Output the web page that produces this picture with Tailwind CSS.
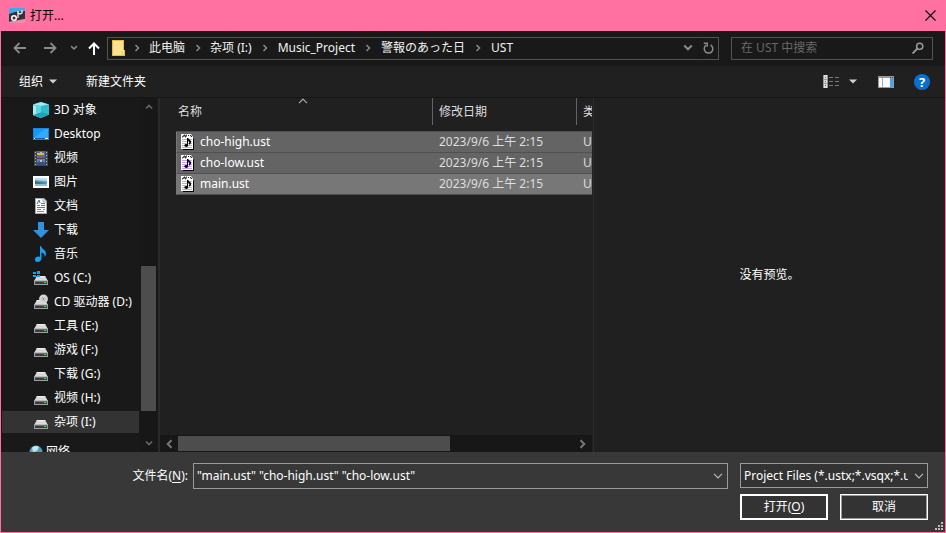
<!DOCTYPE html>
<html lang="zh-CN">
<head>
<meta charset="utf-8">
<title>打开...</title>
<script src="https://cdn.jsdelivr.net/npm/@tailwindcss/browser@4"></script>
</head>
<body class="h-screen overflow-hidden bg-[#191919] font-['Noto_Sans','Noto_Sans_CJK_SC',sans-serif] text-xs text-white">
<svg class="hidden" aria-hidden="true">
  <symbol id="drive" viewBox="0 0 16 16">
    <path d="M4 5h8l3 5H1z" fill="#d9dadd"/><path d="M4 5h8l.6 1H3.4z" fill="#eeeff1"/>
    <path d="M1 9.500h14v4.500H1z" fill="#9c9ea2"/><path d="M2 10.500h12v2.500H2z" fill="#3a3c40"/>
    <path d="M11 11h2v1h-2z" fill="#35e04a"/>
  </symbol>
  <symbol id="ust" viewBox="0 0 14 16">
    <path d="M2 15h10V4l1 1v11H2z" fill="#000"/><path d="M0 0h10l2 3v12H0z" fill="#fff"/>
    <path d="M1 5.500h10M1 7.500h10M1 9.500h10M1 11.500h10M1 13.500h10" stroke="#c9a0f2"/>
    <path d="M1 3h1V2h1V1h1v2h1V1h1M7 1.500h1M9 1.500h1v1h1" stroke="#000" stroke-width=".8" fill="none"/>
    <path d="M6 4h1l3 3v2L8 11V9l.5-1L7 6.500V12H6z"/><ellipse cx="5.300" cy="11.500" rx="1.900" ry="1.400"/>
  </symbol>
  <symbol id="crumb" viewBox="0 0 6 8"><path d="M1.500 1L4.500 4l-3 3" fill="none" stroke="#8a8a8a" stroke-width="1.500"/></symbol>
  <symbol id="down" viewBox="0 0 10 6"><path d="M1 .8l4 4 4-4" fill="none" stroke="currentColor" stroke-width="1.200"/></symbol>
  <symbol id="bold-down" viewBox="0 0 10 8"><path d="M1.200 1.500L5 5.300l3.800-3.800" fill="none" stroke="currentColor" stroke-width="2"/></symbol>
</svg>

<div class="flex h-full flex-col border border-[#ff71a0]">
  <header class="flex h-[30px] shrink-0 items-center bg-[#ff71a0] pl-2 text-black">
    <svg class="size-4 shrink-0" viewBox="0 0 16 16"><path d="M1 0h14l1 1v7L0 9V1z" fill="#4aa5e8"/><path d="M0 6l6-2 10-1v8L0 14z" fill="#30343d"/><path d="M0 14l16-3v3l-1 1H1z" fill="#f58aac"/><circle cx="5" cy="10" r="2.300" fill="#30343d" stroke="#fff" stroke-width="1.500"/><path d="M9 9V3M9 5l2 1 2-1V2" fill="none" stroke="#fff" stroke-width="1.200"/><path d="M8 9h2" stroke="#f47f9d" stroke-width="2"/></svg>
    <h1 class="ml-[5px] flex-1">打开...</h1>
    <button type="button" aria-label="关闭" class="flex h-full w-[30px] items-center justify-center pb-[2px]"><svg class="size-[11px]" viewBox="0 0 11 11"><path d="M.5.5l10 10M10.500.5l-10 10" stroke="#000" stroke-width="1.100"/></svg></button>
  </header>

  <nav class="flex h-[34px] shrink-0 items-center pr-3 pl-3 text-[#8a8a8a]">
    <button type="button" aria-label="后退" class="w-[14px]"><svg class="h-3 w-[14px]" viewBox="0 0 14 12"><path d="M13 6H2M6.500 1L1.500 6l5 5" fill="none" stroke="currentColor" stroke-width="1.800"/></svg></button>
    <button type="button" aria-label="前进" class="ml-4 w-[14px]"><svg class="h-3 w-[14px]" viewBox="0 0 14 12"><path d="M1 6h11M7.500 1l5 5-5 5" fill="none" stroke="currentColor" stroke-width="1.800"/></svg></button>
    <button type="button" aria-label="最近位置" class="ml-[13px] w-2"><svg class="h-[6px] w-2"><use href="#bold-down"/></svg></button>
    <button type="button" aria-label="上移" class="ml-[10px] w-3 text-white"><svg class="h-[13px] w-3" viewBox="0 0 12 13"><path d="M6 13V2M1 6.500l5-5 5 5" fill="none" stroke="currentColor" stroke-width="2"/></svg></button>
    <div class="ml-[7px] flex h-[23px] min-w-0 flex-1 items-center border border-[#535353] pl-1 whitespace-nowrap text-[#f2f2f2]">
      <svg class="h-4 w-[13px] shrink-0" viewBox="0 0 13 16"><path d="M0 0h12v10h1v6H0z" fill="#e8bb45"/><path d="M1 1h10v14H1z" fill="#ffe490"/><path d="M11 10h1v5h-2v-3z" fill="#ffe490"/><path d="M10 11v4" stroke="#edc65a"/></svg>
      <span class="flex w-6 shrink-0 justify-center"><svg class="h-2 w-[6px]"><use href="#crumb"/></svg></span>
      <a href="#">此电脑</a>
      <span class="flex w-[25px] shrink-0 justify-center"><svg class="h-2 w-[6px]"><use href="#crumb"/></svg></span>
      <a href="#">杂项 (I:)</a>
      <span class="flex w-[26px] shrink-0 justify-center"><svg class="h-2 w-[6px]"><use href="#crumb"/></svg></span>
      <a href="#">Music_Project</a>
      <span class="flex w-[26px] shrink-0 justify-center"><svg class="h-2 w-[6px]"><use href="#crumb"/></svg></span>
      <a href="#" lang="ja" class="font-['Noto_Sans','Noto_Sans_CJK_JP',sans-serif]">警報のあった日</a>
      <span class="flex w-[26px] shrink-0 justify-center"><svg class="h-2 w-[6px]"><use href="#crumb"/></svg></span>
      <a href="#">UST</a>
      <button type="button" aria-label="以前的位置" class="ml-auto flex w-5 justify-center text-[#8a8a8a]"><svg class="h-2 w-[10px]"><use href="#bold-down"/></svg></button>
      <button type="button" aria-label="刷新" class="flex h-full w-5 items-center justify-center border-l border-[#151515] text-[#8a8a8a]"><svg class="h-3 w-[11px]" viewBox="0 0 11 12"><path d="M7.500 3a4.300 4.300 0 1 1-4.300.2" fill="none" stroke="currentColor" stroke-width="1.500"/><path d="M.8 1.200h3.400v3.600" fill="none" stroke="currentColor" stroke-width="1.500"/></svg></button>
    </div>
    <label class="ml-3 flex h-[23px] w-[202px] shrink-0 items-center border border-[#535353] pr-2 pl-[9px]">
      <input type="search" aria-label="在 UST 中搜索" placeholder="在 UST 中搜索" class="min-w-0 flex-1 bg-transparent outline-none placeholder:text-[#686868]">
      <svg class="size-3 shrink-0" viewBox="0 0 12 12"><circle cx="7.700" cy="4.300" r="3.100" fill="none" stroke="#999" stroke-width="1.500"/><path d="M5.500 6.500l-5 5" stroke="#999" stroke-width="1.800"/></svg>
    </label>
  </nav>

  <div class="flex h-[33px] shrink-0 items-center border-t border-b border-t-[#191919] border-b-[#161616] bg-[#202020] pr-[15px] pl-[18px]">
    <button type="button" class="flex items-center">组织<svg class="ml-[6px] h-[5px] w-2" viewBox="0 0 8 5"><path d="M0 .5h8L4 4.500z" fill="#d0d0d0"/></svg></button>
    <button type="button" class="ml-[29px]">新建文件夹</button>
    <button type="button" aria-label="更改视图" class="ml-auto"><svg class="h-[13px] w-4" viewBox="0 0 16 13"><path d="M0 0h5v13H0z" fill="#ddd"/><path d="M0 4.500h5M0 8.500h5M.5 0v13M4.500 0v13" stroke="#999"/><path d="M2 2h1v1H2z" fill="#777"/><path d="M2 6h1v1H2z" fill="#2080d0"/><path d="M2 10h1v1H2z" fill="#c33"/><path d="M6 2.500h4M12 2.500h4M6 6.500h4M12 6.500h4M6 10.500h4M12 10.500h4" stroke="#777"/></svg></button>
    <button type="button" aria-label="更多视图" class="ml-[10px]"><svg class="h-[5px] w-2" viewBox="0 0 8 5"><path d="M0 .5h8L4 4.500z" fill="#d0d0d0"/></svg></button>
    <button type="button" aria-label="预览窗格" class="ml-[21px]"><svg class="h-3 w-4" viewBox="0 0 16 12"><path d="M0 0h16v12H0z" fill="#999"/><path d="M1 2h11v9H1z" fill="#fafafa"/><path d="M12 2h3v9h-3z" fill="#4aa3e8"/><path d="M4.500 2v9" stroke="#aaa"/><path d="M12 1h1v1h-1zM14 1h1v1h-1z" fill="#444"/></svg></button>
    <button type="button" aria-label="帮助" class="ml-5 flex size-4 items-center justify-center rounded-full bg-[#0b6fd0] text-[13px] leading-4 font-bold">?</button>
  </div>

  <main class="flex min-h-0 flex-1">
    <aside class="flex w-[159px] shrink-0 overflow-hidden border-r-2 border-[#2a2a2a]">
      <ul class="min-w-0 flex-1 overflow-hidden whitespace-nowrap">
        <li class="flex h-6 items-center pl-8"><svg class="mr-[5px] size-4 shrink-0" viewBox="0 0 16 16"><path d="M8 0l8 2.500v10L8 16l-8-3V2.500z" fill="#20b7cf"/><path d="M0 2.500L8 0l8 2.500L8 4z" fill="#9debf2"/><path d="M0 3l8 1.500V16l-8-3z" fill="#a4ecf1"/><path d="M8 4.500l8-2v10L8 16z" fill="#30bccf"/><path d="M0 13l8-3 8 2.500L8 16z" fill="#21a2ba"/><path d="M3 4l5 .6v5.600L3 11.500z" fill="#5cd5e0"/></svg>3D 对象</li>
        <li class="flex h-6 items-center pl-8"><svg class="mr-[5px] size-4 shrink-0" viewBox="0 0 16 16"><path d="M0 2h16v12H0z" fill="#1686df"/><path d="M1 3h14v9H1z" fill="#1698fb"/><path d="M1 12L12 3h3v9z" fill="#35a9ff"/><path d="M1 12.500h14" stroke="#0861ac"/><path d="M1 12h1v1H1zM12 12h3v1h-3z" fill="#fff"/></svg>Desktop</li>
        <li class="flex h-6 items-center pl-8"><svg class="mr-[5px] size-4 shrink-0" viewBox="0 0 16 16"><path d="M1 1h14v15H1z" fill="#42464d"/><path d="M2.500 2v14M13.500 2v14" stroke="#bbb" stroke-dasharray="1 2"/><path d="M4 1h8v7H4z" fill="#426bc2"/><path d="M4 3h3V2h2v1h2v2H9v1H7V5H4z" fill="#dcb944"/><path d="M6 5h3v2H6z" fill="#b64973"/><path d="M4 9h8v6H4z" fill="#4e83da"/><path d="M4 13l4-3 4 3v2H4z" fill="#334f88"/><path d="M7 10h2v2H7z" fill="#e5c654"/></svg>视频</li>
        <li class="flex h-6 items-center pl-8"><svg class="mr-[5px] size-4 shrink-0" viewBox="0 0 16 16"><path d="M0 2h16v12H0z" fill="#fff"/><path d="M2 4h12v8H2z" fill="#62a7db"/><path d="M2 4h12v3L2 6z" fill="#bcdcf1"/><path d="M2 7l4 1 8 1v1H2z" fill="#356f67"/><path d="M2 10l12-.5V12H2z" fill="#8fbed5"/></svg>图片</li>
        <li class="flex h-6 items-center pl-8"><svg class="mr-[5px] size-4 shrink-0" viewBox="0 0 16 16"><path d="M2 0h9l3 3v13H2z" fill="#aaa"/><path d="M3 1h7l3 3v11H3z" fill="#fff"/><path d="M10 0v4h4" fill="#ddd" stroke="#999" stroke-width=".7"/><path d="M4 6l2-4 1 3" fill="none" stroke="#277bbb"/><path d="M8 5.500h4M8 7.500h4M4 9.500h8" stroke="#3a85bd"/><path d="M4 7.500h3M4 11.500h4M10 11.500h2M4 13.500h7" stroke="#888"/></svg>文档</li>
        <li class="flex h-6 items-center pl-8"><svg class="mr-[5px] size-4 shrink-0" viewBox="0 0 16 16"><path d="M5 0h6v8h5l-8 8-8-8h5z" fill="#3590de"/></svg>下载</li>
        <li class="flex h-6 items-center pl-8"><svg class="mr-[5px] size-4 shrink-0" viewBox="0 0 16 16"><path d="M7 0h1c.5 3 5 3.500 5 7.500 0 1.500-.5 2.500-1.500 3.500.5-3-1-4-3-4.500V12c0 2.500-1.800 4-4 4S2 14.700 2 13.300C2 11 5 10 7 11z" fill="#16a0f5"/></svg>音乐</li>
        <li class="flex h-6 items-center pl-8"><svg class="mr-[5px] size-4 shrink-0" viewBox="0 0 16 16"><use href="#drive" y="1"/><path d="M0 2h3v2H0zM4 1h3v3H4zM0 5h3v2H0zM4 5h3v2H4z" fill="#00adef"/></svg>OS (C:)</li>
        <li class="flex h-6 items-center pl-8"><svg class="mr-[5px] size-4 shrink-0" viewBox="0 0 16 16"><use href="#drive" y="1"/><circle cx="10.500" cy="5" r="3.200" fill="#555" stroke="#d5d5d5" stroke-width="2.500"/><circle cx="10.500" cy="5" r="1.500" fill="#888" stroke="#eee"/></svg>CD 驱动器 (D:)</li>
        <li class="flex h-6 items-center pl-8"><svg class="mr-[5px] size-4 shrink-0" viewBox="0 0 16 16"><use href="#drive" y="1"/></svg>工具 (E:)</li>
        <li class="flex h-6 items-center pl-8"><svg class="mr-[5px] size-4 shrink-0" viewBox="0 0 16 16"><use href="#drive" y="1"/></svg>游戏 (F:)</li>
        <li class="flex h-6 items-center pl-8"><svg class="mr-[5px] size-4 shrink-0" viewBox="0 0 16 16"><use href="#drive" y="1"/></svg>下载 (G:)</li>
        <li class="flex h-6 items-center pl-8"><svg class="mr-[5px] size-4 shrink-0" viewBox="0 0 16 16"><use href="#drive" y="1"/></svg>视频 (H:)</li>
        <li class="mx-px my-px flex h-[22px] items-center bg-[#333] pl-[31px]" aria-current="true"><svg class="mr-[5px] size-4 shrink-0" viewBox="0 0 16 16"><use href="#drive" y="1"/></svg>杂项 (I:)</li>
        <li class="mt-[7px] flex h-6 items-center pl-7"><svg class="mr-[3px] size-[14px] shrink-0" viewBox="0 0 14 14"><circle cx="7" cy="7" r="6.500" fill="#4c9fc4"/><path d="M3 3c2-3 6-2 7-1L8 6 4 7z" fill="#c6e4ee"/></svg>网络</li>
      </ul>
      <div class="mr-px flex w-[17px] shrink-0 flex-col items-center bg-[#171717] text-[#686868]">
        <button type="button" aria-label="向上滚动" class="flex h-[17px] items-center"><svg class="h-[7px] w-2 rotate-180"><use href="#bold-down"/></svg></button>
        <div class="flex w-[15px] flex-1 flex-col"><div class="flex-[151]"></div><div class="flex-[145] bg-[#4d4d4d]"></div><div class="flex-[24]"></div></div>
        <button type="button" aria-label="向下滚动" class="flex h-[17px] items-center"><svg class="h-[7px] w-2"><use href="#bold-down"/></svg></button>
      </div>
    </aside>

    <section class="flex min-w-0 flex-1 flex-col border-r border-[#2d2d2d] bg-[#202020] pr-px">
      <div class="relative min-h-0 flex-1 overflow-hidden pl-4">
        <svg class="absolute top-0 left-[138px] h-[6px] w-[10px] rotate-180 text-[#aaa]"><use href="#down"/></svg>
        <table class="w-full table-fixed border-separate border-spacing-0 text-left whitespace-nowrap">
          <colgroup><col><col class="w-36"><col class="w-[15px]"></colgroup>
          <thead class="text-[#dedede]">
            <tr class="h-[27px]"><th scope="col" class="border-r border-[#636363] p-0 pl-[2px] font-normal">名称</th><th scope="col" class="border-r border-[#636363] p-0 pl-[6px] font-normal">修改日期</th><th scope="col" class="overflow-hidden p-0 pl-[6px] font-normal">类型</th></tr>
          </thead>
          <tbody>
            <tr aria-hidden="true" class="h-[7px]"><td colspan="3" class="border-b border-[#505050] p-0"></td></tr>
            <tr class="h-[21px] bg-[#646464]"><td class="border-b border-l border-b-[#505050] border-l-[#777] p-0 pl-1"><span class="flex items-center"><svg class="mr-[5px] h-4 w-[14px]"><use href="#ust"/></svg>cho-high.ust</span></td><td class="border-b border-[#505050] p-0 pl-[6px] text-[#dedede]">2023/9/6 上午 2:15</td><td class="overflow-hidden border-b border-[#505050] p-0 pl-[6px] text-[#dedede]">UST</td></tr>
            <tr class="h-[21px] bg-[#646464]"><td class="border-b border-l border-b-[#505050] border-l-[#777] p-0 pl-1"><span class="flex items-center"><svg class="mr-[5px] h-4 w-[14px]"><use href="#ust"/></svg>cho-low.ust</span></td><td class="border-b border-[#505050] p-0 pl-[6px] text-[#dedede]">2023/9/6 上午 2:15</td><td class="overflow-hidden border-b border-[#505050] p-0 pl-[6px] text-[#dedede]">UST</td></tr>
            <tr class="h-[21px] bg-[#777]"><td class="border-b border-l border-b-[#505050] border-l-[#777] p-0 pl-1"><span class="flex items-center"><svg class="mr-[5px] h-4 w-[14px]"><use href="#ust"/></svg>main.ust</span></td><td class="border-b border-[#505050] p-0 pl-[6px] text-[#dedede]">2023/9/6 上午 2:15</td><td class="overflow-hidden border-b border-[#505050] p-0 pl-[6px] text-[#dedede]">UST</td></tr>
          </tbody>
        </table>
      </div>
      <div class="flex h-[17px] shrink-0 bg-[#171717] py-px text-[#777]">
        <button type="button" aria-label="向左滚动" class="flex w-[18px] items-center justify-center"><svg class="h-[8px] w-[10px] rotate-90"><use href="#bold-down"/></svg></button>
        <div class="flex flex-1"><div class="flex-[273] bg-[#4d4d4d]"></div><div class="flex-[124]"></div></div>
        <button type="button" aria-label="向右滚动" class="flex w-[18px] items-center justify-center"><svg class="h-[8px] w-[10px] -rotate-90"><use href="#bold-down"/></svg></button>
      </div>
    </section>

    <section class="flex w-[351px] shrink-0 items-center justify-center bg-[#202020]"><p>没有预览。</p></section>
  </main>

  <form class="relative flex h-20 shrink-0 gap-3 bg-[#383838] pt-[11px] pr-[17px]">
    <div class="flex h-[26px] min-w-0 flex-1 items-center">
      <label for="filename" class="w-[187px] shrink-0 text-right">文件名(<u class="underline-offset-2">N</u>):</label>
      <div class="ml-[5px] flex h-[26px] min-w-0 flex-1 items-center border border-[#9b9b9b] pr-1 pl-[3px]">
        <input id="filename" type="text" value='"main.ust" "cho-high.ust" "cho-low.ust"' class="min-w-0 flex-1 bg-transparent outline-none">
        <button type="button" aria-label="文件名列表"><svg class="h-[6px] w-[10px] text-[#bbb]"><use href="#down"/></svg></button>
      </div>
    </div>
    <div class="flex w-[188px] shrink-0 flex-col gap-[6px]">
      <div class="relative h-[25px] shrink-0">
        <select aria-label="文件类型" class="h-[25px] w-full appearance-none border border-[#9b9b9b] bg-[#333] pr-[19px] pl-[3px] outline-none"><option>Project Files (*.ustx;*.vsqx;*.ust;*.mid)</option></select>
        <svg class="pointer-events-none absolute top-[10px] right-1 h-[6px] w-[10px] text-[#bbb]"><use href="#down"/></svg>
      </div>
      <div class="grid grid-cols-2 gap-3">
        <button type="submit" class="h-[26px] border-2 border-white bg-[#333]">打开(<u class="underline-offset-2">O</u>)</button>
        <button type="button" class="h-[26px] border border-white bg-[#333] inset-ring inset-ring-[#999]">取消</button>
      </div>
    </div>
    <svg class="absolute right-[2px] bottom-[2px] size-2" viewBox="0 0 8 8"><path d="M6 0h2v2H6zM3 3h2v2H3zM6 3h2v2H6zM0 6h2v2H0zM3 6h2v2H3zM6 6h2v2H6z" fill="#bbb"/></svg>
  </form>
</div>
</body>
</html>
